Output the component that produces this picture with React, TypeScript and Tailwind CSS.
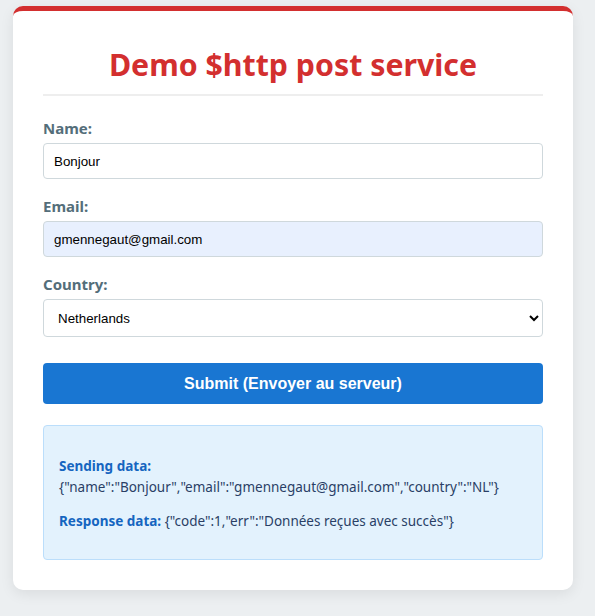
import { useState } from 'react';

const countries = [
  { code: 'FR', label: 'France' },
  { code: 'BE', label: 'Belgium' },
  { code: 'NL', label: 'Netherlands' },
  { code: 'DE', label: 'Germany' },
];

export default function App() {
  const [name, setName] = useState('Bonjour');
  const [email, setEmail] = useState('gmennegaut@gmail.com');
  const [country, setCountry] = useState('NL');

  const sending = JSON.stringify({ name, email, country });
  const response = '{"code":1,"err":"Données reçues avec succès"}';

  return (
    <div className="min-h-[616px] w-[595px] bg-[#eceff1] pt-[6px] pl-[13px] font-['Noto_Sans',sans-serif]">
      <div className="w-[560px] rounded-[10px] border-t-[5px] border-[#d32f2f] bg-white px-[30px] pb-[30px] shadow-[0_4px_14px_rgba(0,0,0,0.08)]">
        {/* Titre */}
        <h1 className="mt-[35px] border-b-2 border-[#eeeeee] pb-[11px] text-center text-[30.3px] font-bold leading-[37px] text-[#d32f2f]">
          Demo $http post service
        </h1>

        <form className="mt-[22px]" onSubmit={(e) => e.preventDefault()}>
          <label className="block text-[15px] font-bold leading-[20px] text-[#546e7a]">Name:</label>
          <input
            className="mt-[5px] block h-[36px] w-full rounded-[4px] border border-[#cfd8dc] bg-white px-[10px] font-['Liberation_Sans',sans-serif] text-[13.33px] text-black outline-none"
            value={name}
            onChange={(e) => setName(e.target.value)}
          />

          <label className="mt-[17px] block text-[15px] font-bold leading-[20px] text-[#546e7a]">Email:</label>
          <input
            className="mt-[5px] block h-[36px] w-full rounded-[4px] border border-[#cfd8dc] bg-[#e8f0fe] px-[10px] font-['Liberation_Sans',sans-serif] text-[13.33px] text-black outline-none"
            value={email}
            onChange={(e) => setEmail(e.target.value)}
          />

          <label className="mt-[17px] block text-[15px] font-bold leading-[20px] text-[#546e7a]">Country:</label>
          <select
            className="mt-[5px] block h-[38px] w-full rounded-[4px] border border-[#cfd8dc] bg-white px-[10px] font-['Liberation_Sans',sans-serif] text-[13.33px] text-black outline-none"
            value={country}
            onChange={(e) => setCountry(e.target.value)}
          >
            {countries.map((c) => (
              <option key={c.code} value={c.code}>
                {c.label}
              </option>
            ))}
          </select>

          <button
            type="submit"
            className="mt-[26px] block h-[41px] w-full rounded-[4px] bg-[#1976d2] font-['Liberation_Sans',sans-serif] text-[16px] font-bold text-white"
          >
            Submit (Envoyer au serveur)
          </button>
        </form>

        {/* Résultat */}
        <div className="mt-[21px] h-[135px] rounded-[4px] border border-[#bbdefb] bg-[#e3f2fd] px-[15px] pt-[30px] text-[13.5px] leading-[21px] text-[#2a3f66]">
          <p>
            <strong className="text-[#1565c0]">Sending data:</strong>
            <br />
            {sending}
          </p>
          <p className="mt-[13px]">
            <strong className="text-[#1565c0]">Response data:</strong> {response}
          </p>
        </div>
      </div>
    </div>
  );
}
